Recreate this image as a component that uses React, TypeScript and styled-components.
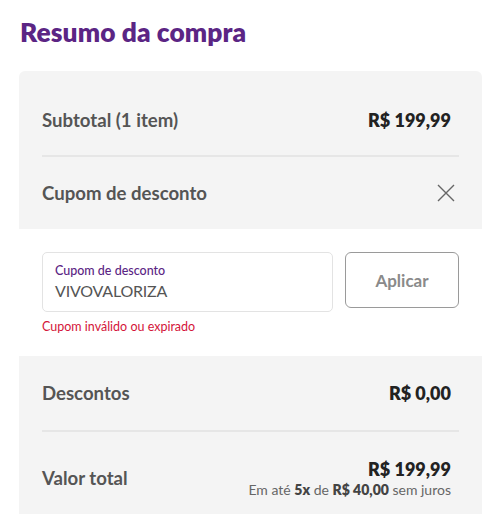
import React from "react";
import styled, { createGlobalStyle } from "styled-components";

const Global = createGlobalStyle`
  html, body { margin: 0; padding: 0; background: #ffffff; }
  body { font-family: Lato, "Open Sans", sans-serif; }
  * { box-sizing: border-box; }
`;

const Page = styled.div`
  padding: 14px 18px 0 19px;
  width: 500px;
`;

const Title = styled.h1`
  margin: 0 0 0 1px;
  font-size: 26.3px;
  line-height: 36px;
  font-weight: 800;
  color: #5b2584;
  letter-spacing: 0.1px;
`;

const Card = styled.section`
  margin-top: 21px;
  width: 463px;
  background: #f4f4f4;
  border-radius: 6px 6px 0 0;
  padding-bottom: 2px;
`;

const Row = styled.div<{ $h: number; $top?: number; $divider?: boolean }>`
  margin: 0 23px;
  height: ${(p) => p.$h}px;
  padding-top: ${(p) => p.$top ?? 0}px;
  display: flex;
  align-items: center;
  justify-content: space-between;
  border-bottom: ${(p) => (p.$divider ? "2px solid #e6e6e6" : "none")};
`;

const Label = styled.span`
  font-size: 18.6px;
  font-weight: 700;
  color: #555555;
`;

const Amount = styled.span<{ $inset?: boolean }>`
  font-size: 18px;
  font-weight: 800;
  color: #222222;
  padding-right: ${(p) => (p.$inset === false ? 0 : 8)}px;
`;

const CloseButton = styled.button`
  border: none;
  background: transparent;
  padding: 0;
  margin-right: 3px;
  width: 20px;
  height: 20px;
  display: flex;
  align-items: center;
  justify-content: center;
  cursor: pointer;
`;

const CouponArea = styled.div`
  background: #ffffff;
  padding: 23px 23px 0 23px;
  height: 127px;
`;

const CouponForm = styled.div`
  display: flex;
  gap: 12px;
  align-items: flex-start;
`;

const Field = styled.label`
  width: 291px;
  height: 60px;
  border: 1px solid #e3e3e3;
  border-radius: 5px;
  padding: 9px 12px 0 12px;
  display: flex;
  flex-direction: column;
`;

const FieldLabel = styled.span`
  font-size: 12.5px;
  line-height: 17px;
  color: #5b2584;
  font-weight: 500;
`;

const FieldValue = styled.span`
  font-size: 16px;
  line-height: 24px;
  color: #555555;
  letter-spacing: -0.2px;
`;

const ApplyButton = styled.button`
  width: 114px;
  height: 56px;
  border: 1px solid #9a9a9a;
  border-radius: 6px;
  background: #ffffff;
  font-family: inherit;
  font-size: 17px;
  font-weight: 700;
  color: #8a8a8a;
`;

const ErrorText = styled.div`
  margin-top: 7px;
  font-size: 12.5px;
  color: #d4153a;
`;

const TotalRow = styled.div`
  margin: 0 23px;
  height: 88px;
  display: flex;
  align-items: center;
  justify-content: space-between;
  padding-top: 4px;
`;

const TotalRight = styled.div`
  display: flex;
  flex-direction: column;
  align-items: flex-end;
  padding-right: 8px;
`;

const Installments = styled.span`
  font-size: 14px;
  color: #666666;
  margin-top: 1px;
  b { font-weight: 800; color: #444444; }
`;

export default function App() {
  return (
    <Page>
      <Global />
      <Title>Resumo da compra</Title>
      <Card>
        <Row $h={86} $top={14} $divider>
          <Label>Subtotal (1 item)</Label>
          <Amount>R$ 199,99</Amount>
        </Row>
        <Row $h={72}>
          <Label>Cupom de desconto</Label>
          <CloseButton aria-label="Fechar">
            <svg width="18" height="18" viewBox="0 0 18 18">
              <path d="M1 1 L17 17 M17 1 L1 17" stroke="#666" strokeWidth="1.4" fill="none" />
            </svg>
          </CloseButton>
        </Row>
        <CouponArea>
          <CouponForm>
            <Field>
              <FieldLabel>Cupom de desconto</FieldLabel>
              <FieldValue>VIVOVALORIZA</FieldValue>
            </Field>
            <ApplyButton>Aplicar</ApplyButton>
          </CouponForm>
          <ErrorText>Cupom inválido ou expirado</ErrorText>
        </CouponArea>
        <Row $h={76} $divider>
          <Label>Descontos</Label>
          <Amount>R$ 0,00</Amount>
        </Row>
        <TotalRow>
          <Label>Valor total</Label>
          <TotalRight>
            <Amount $inset={false}>R$ 199,99</Amount>
            <Installments>
              Em até <b>5x</b> de <b>R$ 40,00</b> sem juros
            </Installments>
          </TotalRight>
        </TotalRow>
      </Card>
    </Page>
  );
}
